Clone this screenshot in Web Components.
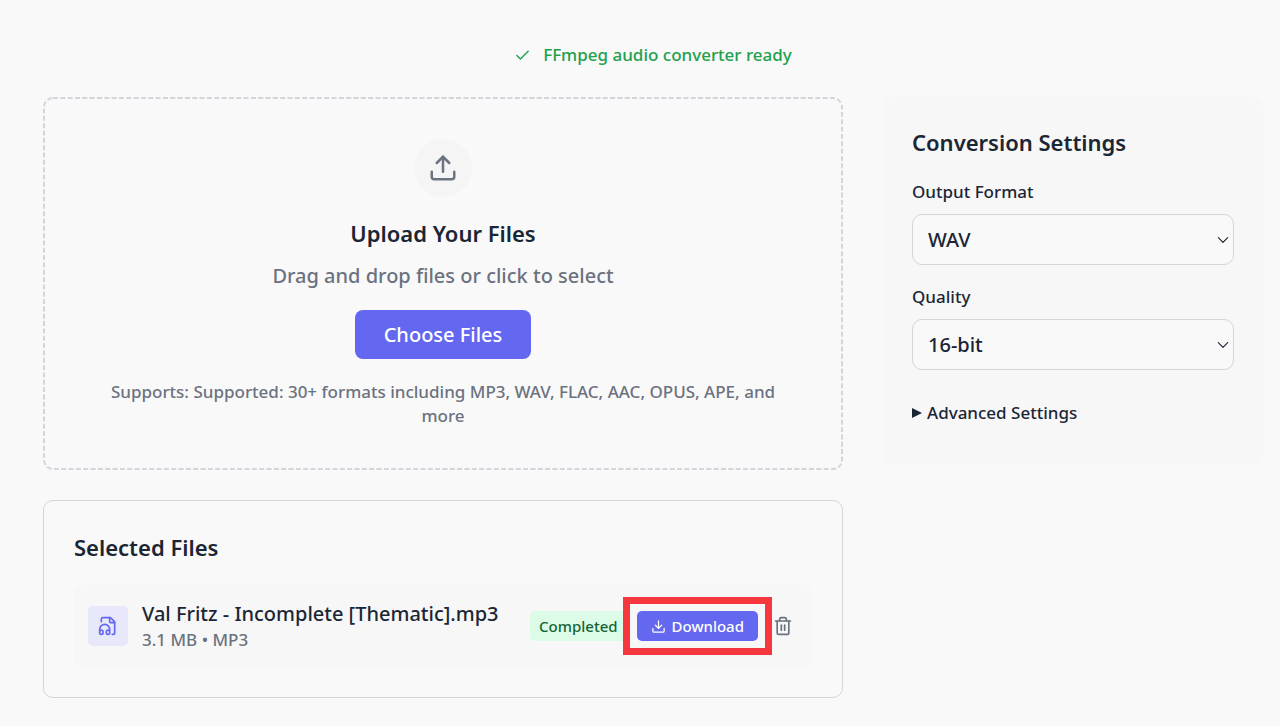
<!DOCTYPE html>
<html lang="en">
<head>
<meta charset="utf-8">
<meta name="viewport" content="width=device-width, initial-scale=1">
<title>Audio Converter</title>
<style>
    :root{
        --bg: #f9f9f9;
        --panel: #f7f7f7;
        --circle: #f5f5f5;
        --text: #1b2635;
        --muted: #6b7280;
        --border: #d2d5dc;
        --primary: #6467f0;
        --primary-soft: #e7e8f9;
        --green: #22a04b;
        --badge-bg: #dcfce7;
        --badge-text: #166534;
        --red: #f6373e;
    }
    body{
        margin: 0;
        background: var(--bg);
        color: var(--text);
        font-family: "Noto Sans", sans-serif;
        font-size: 17px;
        font-weight: 500;
        line-height: 24px;
    }
</style>
</head>
<body>
<converter-app>
    <status-line slot="status">FFmpeg audio converter ready</status-line>
    <drop-zone title-text="Upload Your Files" hint="Drag and drop files or click to select">Supports: Supported: 30+ formats including MP3, WAV, FLAC, AAC, OPUS, APE, and more</drop-zone>
    <file-list>
        <file-row meta="3.1 MB • MP3" status="Completed">Val Fritz - Incomplete [Thematic].mp3</file-row>
    </file-list>
    <conversion-settings slot="side">
        <setting-select label="Output Format" options="WAV,MP3,FLAC,AAC,OPUS"></setting-select>
        <setting-select label="Quality" options="16-bit,24-bit,32-bit"></setting-select>
    </conversion-settings>
</converter-app>

<script>
const ICONS = {
    check: '<path d="M20 6 9 17l-5-5"/>',
    upload: '<path d="M12 3v12"/><path d="m17 8-5-5-5 5"/><path d="M21 15v4a2 2 0 0 1-2 2H5a2 2 0 0 1-2-2v-4"/>',
    download: '<path d="M12 15V3"/><path d="m7 10 5 5 5-5"/><path d="M21 15v4a2 2 0 0 1-2 2H5a2 2 0 0 1-2-2v-4"/>',
    trash: '<path d="M3 6h18"/><path d="M19 6v14a2 2 0 0 1-2 2H7a2 2 0 0 1-2-2V6"/><path d="M8 6V4a2 2 0 0 1 2-2h4a2 2 0 0 1 2 2v2"/><path d="M10 11v6"/><path d="M14 11v6"/>',
    audio: '<path d="M4 7V4a2 2 0 0 1 2-2h9l5 5v13a2 2 0 0 1-2 2h-1"/><path d="M14 2v5a1 1 0 0 0 1 1h5"/><path d="M2 19a2 2 0 0 1 4 0v1a2 2 0 0 1-4 0v-4a6 6 0 0 1 12 0v4a2 2 0 0 1-4 0v-1a2 2 0 0 1 4 0"/>',
    chevron: '<path d="m4 8 8 8 8-8"/>'
}

class UiIcon extends HTMLElement{
    constructor(){
        super()
        this.attachShadow({mode: 'open'})
    }
    connectedCallback(){
        const size   = this.getAttribute('size') || 24
        this.shadowRoot.innerHTML = `
            <style>
                :host{
                    display: inline-flex;
                    flex: none;
                }
            </style>
            <svg width="${size}" height="${size}" viewBox="0 0 24 24" fill="none" stroke="currentColor"
                stroke-width="2" stroke-linecap="round" stroke-linejoin="round" aria-hidden="true">${ICONS[this.getAttribute('name')]}</svg>
        `
    }
}

class ConverterApp extends HTMLElement{
    constructor(){
        super()
        this.attachShadow({mode: 'open'})
        this.shadowRoot.innerHTML = `
            <style>
                :host{
                    display: block;
                    padding: 43px 17px 28px 43px;
                }
                .columns{
                    display: grid;
                    grid-template-columns: minmax(0, 40fr) minmax(0, 19fr);
                    gap: 40px;
                    align-items: start;
                    margin-top: 30px;
                }
                main{
                    display: flex;
                    flex-direction: column;
                    gap: 30px;
                }
            </style>
            <slot name="status"></slot>
            <div class="columns">
                <main><slot></slot></main>
                <aside><slot name="side"></slot></aside>
            </div>
        `
    }
}

class StatusLine extends HTMLElement{
    constructor(){
        super()
        this.attachShadow({mode: 'open'})
        this.shadowRoot.innerHTML = `
            <style>
                :host{
                    display: flex;
                    justify-content: center;
                    align-items: center;
                    gap: 12px;
                    color: var(--green);
                }
            </style>
            <ui-icon name="check" size="17"></ui-icon>
            <span role="status"><slot></slot></span>
        `
    }
}

class DropZone extends HTMLElement{
    constructor(){
        super()
        this.attachShadow({mode: 'open'})
        this.shadowRoot.innerHTML = `
            <style>
                :host{
                    position: relative;
                    display: flex;
                    flex-direction: column;
                    align-items: center;
                    padding: 42px 60px;
                    text-align: center;
                }
                /* dashes are shorter and closer than border-style: dashed gives */
                .outline{
                    position: absolute;
                    inset: 0;
                    width: 100%;
                    height: 100%;
                    pointer-events: none;
                }
                .outline rect{
                    x: 1px;
                    y: 1px;
                    width: calc(100% - 2px);
                    height: calc(100% - 2px);
                    rx: 9px;
                    fill: none;
                    stroke: var(--border);
                    stroke-width: 2;
                    stroke-dasharray: 5 2.33;
                }
                .circle{
                    display: flex;
                    align-items: center;
                    justify-content: center;
                    width: 58px;
                    height: 58px;
                    border-radius: 50%;
                    background: var(--circle);
                    color: var(--muted);
                }
                h3{
                    margin: 20px 0 13px;
                    font-size: 22px;
                    line-height: 32px;
                    font-weight: 600;
                }
                p{
                    margin: 0;
                    color: var(--muted);
                }
                .hint{
                    margin-bottom: 20px;
                    font-size: 20px;
                    line-height: 28px;
                }
                button{
                    margin-bottom: 21px;
                    padding: 10px 29px;
                    border: 0;
                    border-radius: 8px;
                    background: var(--primary);
                    color: white;
                    font: inherit;
                    font-size: 20px;
                    line-height: 29px;
                    cursor: pointer;
                }
            </style>
            <svg class="outline" aria-hidden="true"><rect/></svg>
            <div class="circle"><ui-icon name="upload" size="30"></ui-icon></div>
            <h3></h3>
            <p class="hint"></p>
            <button type="button">Choose Files</button>
            <p><slot></slot></p>
        `
        this._titleEl = this.shadowRoot.querySelector('h3')
        this._hintEl  = this.shadowRoot.querySelector('.hint')
    }
    connectedCallback(){
        this._titleEl.textContent = this.getAttribute('title-text')
        this._hintEl.textContent  = this.getAttribute('hint')
    }
}

class SelectedFiles extends HTMLElement{
    constructor(){
        super()
        this.attachShadow({mode: 'open'})
        this.shadowRoot.innerHTML = `
            <style>
                :host{
                    display: block;
                    padding: 30px;
                    border: 1px solid var(--border);
                    border-radius: 10px;
                }
                h3{
                    margin: 0 0 22px;
                    font-size: 22px;
                    line-height: 32px;
                    font-weight: 600;
                }
            </style>
            <h3>Selected Files</h3>
            <slot></slot>
        `
    }
}

class FileRow extends HTMLElement{
    constructor(){
        super()
        this.attachShadow({mode: 'open'})
        this.shadowRoot.innerHTML = `
            <style>
                :host{
                    display: flex;
                    align-items: center;
                    gap: 14px;
                    padding: 15px 14px;
                    border-radius: 8px;
                    background: var(--panel);
                }
                .thumb{
                    display: flex;
                    align-items: center;
                    justify-content: center;
                    flex: none;
                    width: 40px;
                    height: 40px;
                    border-radius: 5px;
                    background: var(--primary-soft);
                    color: var(--primary);
                }
                .info{
                    flex: 1;
                    min-width: 0;
                }
                .name{
                    font-size: 20px;
                    line-height: 28px;
                }
                .meta{
                    color: var(--muted);
                }
                .actions{
                    display: flex;
                    align-items: center;
                    gap: 10px;
                }
                .badge,
                .download{
                    border-radius: 5px;
                    font-size: 15px;
                    line-height: 20px;
                }
                .badge{
                    padding: 5px 9px;
                    background: var(--badge-bg);
                    color: var(--badge-text);
                }
                .highlight{
                    position: relative;
                    display: flex;
                }
                .highlight::after{
                    content: '';
                    position: absolute;
                    inset: -14px;
                    border: 7px solid var(--red);
                    pointer-events: none;
                }
                button{
                    display: flex;
                    align-items: center;
                    border: 0;
                    font: inherit;
                    cursor: pointer;
                }
                .download{
                    gap: 6px;
                    padding: 5px 14px;
                    background: var(--primary);
                    color: white;
                }
                .trash{
                    padding: 5px;
                    background: none;
                    color: var(--muted);
                }
            </style>
            <div class="thumb"><ui-icon name="audio" size="20"></ui-icon></div>
            <div class="info">
                <div class="name"><slot></slot></div>
                <div class="meta"></div>
            </div>
            <div class="actions">
                <span class="badge"></span>
                <div class="highlight">
                    <button class="download" type="button"><ui-icon name="download" size="15"></ui-icon>Download</button>
                </div>
                <button class="trash" type="button" aria-label="Remove file"><ui-icon name="trash" size="20"></ui-icon></button>
            </div>
        `
        this._metaEl  = this.shadowRoot.querySelector('.meta')
        this._badgeEl = this.shadowRoot.querySelector('.badge')
        this.shadowRoot.querySelector('.trash').addEventListener('click', () => this.remove())
    }
    connectedCallback(){
        this._metaEl.textContent  = this.getAttribute('meta')
        this._badgeEl.textContent = this.getAttribute('status')
    }
}

class ConversionSettings extends HTMLElement{
    constructor(){
        super()
        this.attachShadow({mode: 'open'})
        this.shadowRoot.innerHTML = `
            <style>
                :host{
                    display: flex;
                    flex-direction: column;
                    gap: 20px;
                    padding: 29px;
                    border-radius: 10px;
                    background: var(--panel);
                }
                h3{
                    margin: 0 0 2px;
                    font-size: 22px;
                    line-height: 32px;
                    font-weight: 600;
                }
                details{
                    padding: 11px 0;
                }
                summary{
                    display: flex;
                    align-items: center;
                    gap: 5px;
                    cursor: pointer;
                }
                summary::before{
                    content: '';
                    border: solid transparent;
                    border-width: 5px 0 5px 10px;
                    border-left-color: currentColor;
                }
                details[open] summary::before{
                    transform: rotate(90deg);
                }
            </style>
            <h3>Conversion Settings</h3>
            <slot></slot>
            <details>
                <summary>Advanced Settings</summary>
            </details>
        `
    }
}

class SettingSelect extends HTMLElement{
    constructor(){
        super()
        this.attachShadow({mode: 'open'})
        this.shadowRoot.innerHTML = `
            <style>
                :host{
                    display: block;
                }
                label{
                    display: block;
                    margin-bottom: 10px;
                }
                .field{
                    display: grid;
                    align-items: center;
                }
                select,
                ui-icon{
                    grid-area: 1 / 1;
                }
                select{
                    appearance: none;
                    width: 100%;
                    padding: 10px 15px;
                    border: 1px solid var(--border);
                    border-radius: 10px;
                    background: var(--bg);
                    color: inherit;
                    font: inherit;
                    font-size: 20px;
                    line-height: 29px;
                }
                ui-icon{
                    justify-self: end;
                    margin-right: 4px;
                    pointer-events: none;
                }
            </style>
            <label for="field"></label>
            <div class="field">
                <select id="field"></select>
                <ui-icon name="chevron" size="14"></ui-icon>
            </div>
        `
        this._labelEl  = this.shadowRoot.querySelector('label')
        this._selectEl = this.shadowRoot.querySelector('select')
    }
    connectedCallback(){
        this._labelEl.textContent = this.getAttribute('label')
        this._selectEl.replaceChildren(
            ...this.getAttribute('options').split(',').map(name => new Option(name))
        )
    }
}

customElements.define('ui-icon', UiIcon)
customElements.define('converter-app', ConverterApp)
customElements.define('status-line', StatusLine)
customElements.define('drop-zone', DropZone)
customElements.define('file-list', SelectedFiles)
customElements.define('file-row', FileRow)
customElements.define('conversion-settings', ConversionSettings)
customElements.define('setting-select', SettingSelect)
</script>
</body>
</html>
